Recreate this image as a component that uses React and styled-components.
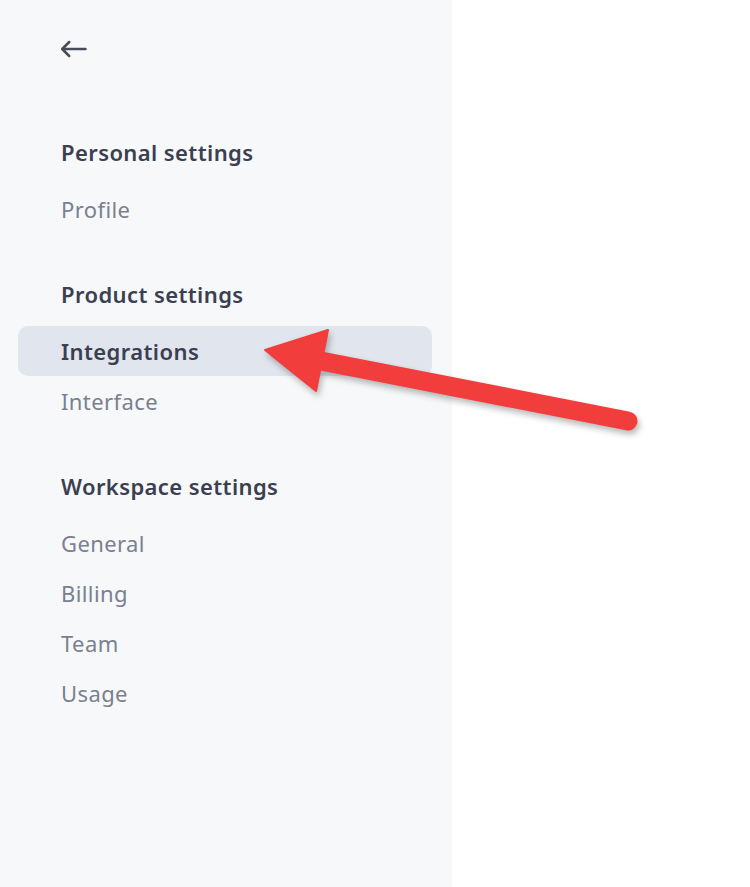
import React from "react";
import styled, { createGlobalStyle } from "styled-components";

const GlobalStyle = createGlobalStyle`
  html, body {
    margin: 0;
    padding: 0;
    background: #ffffff;
  }
  body {
    font-family: "Noto Sans", "Open Sans", sans-serif;
  }
`;

const sections = [
  { title: "Personal settings", items: ["Profile"] },
  { title: "Product settings", items: ["Integrations", "Interface"] },
  { title: "Workspace settings", items: ["General", "Billing", "Team", "Usage"] },
];

function App() {
  return (
    <Page>
      <GlobalStyle />
      <Sidebar>
        <BackButton aria-label="Back">
          <svg width="27" height="18" viewBox="0 0 27 18" fill="none">
            <path
              d="M25.5 9H2.2M9.2 2L2.2 9l7 7"
              stroke="#474c5a"
              strokeWidth="2.5"
              strokeLinecap="round"
              strokeLinejoin="round"
            />
          </svg>
        </BackButton>

        {sections.map((section) => (
          <Section key={section.title}>
            <SectionTitle>{section.title}</SectionTitle>
            <ItemList>
              {section.items.map((item) => (
                <NavItem key={item} $active={item === "Integrations"}>
                  {item}
                </NavItem>
              ))}
            </ItemList>
          </Section>
        ))}
      </Sidebar>
      <Content />

      {/* red callout arrow laid over the page */}
      <Callout width="750" height="887" viewBox="0 0 750 887">
        <g fill="#f23d3d" stroke="#f23d3d">
          <line
            x1="316"
            y1="360"
            x2="628"
            y2="421"
            strokeWidth="19"
            strokeLinecap="round"
          />
          <polygon
            points="265,350 328,330 316,391"
            strokeWidth="2"
            strokeLinejoin="round"
          />
        </g>
      </Callout>
    </Page>
  );
}

const Page = styled.div`
  position: relative;
  display: flex;
  width: 750px;
  height: 887px;
  overflow: hidden;
`;

const Sidebar = styled.nav`
  display: flex;
  flex-direction: column;
  width: 452px;
  flex-shrink: 0;
  background: #f7f8fa;
  padding: 36px 20px 0 18px;
  box-sizing: border-box;
`;

const Content = styled.main`
  flex: 1;
  background: #ffffff;
`;

const BackButton = styled.button`
  display: flex;
  align-items: center;
  width: 30px;
  height: 26px;
  margin: 0 0 75px 42px;
  padding: 0;
  border: none;
  background: none;
  cursor: pointer;
`;

const Section = styled.section`
  display: flex;
  flex-direction: column;
  gap: 17px;
  margin-bottom: 45px;
`;

const SectionTitle = styled.h3`
  margin: 0;
  padding-left: 43px;
  font-size: 22px;
  line-height: 30px;
  letter-spacing: 0.4px;
  font-weight: 600;
  color: #3b4050;
`;

const ItemList = styled.div`
  display: flex;
  flex-direction: column;
`;

const NavItem = styled.a`
  display: block;
  height: 50px;
  padding-left: 43px;
  border-radius: 10px;
  font-size: 22px;
  line-height: 50px;
  letter-spacing: 0.4px;
  font-weight: ${(p) => (p.$active ? 600 : 400)};
  color: ${(p) => (p.$active ? "#3b4050" : "#7a808e")};
  background: ${(p) => (p.$active ? "#e1e6ee" : "transparent")};
  text-decoration: none;
  cursor: pointer;
`;

const Callout = styled.svg`
  position: absolute;
  top: 0;
  left: 0;
  pointer-events: none;
  filter: drop-shadow(2px 4px 3px rgba(0, 0, 0, 0.28));
`;

export default App;
